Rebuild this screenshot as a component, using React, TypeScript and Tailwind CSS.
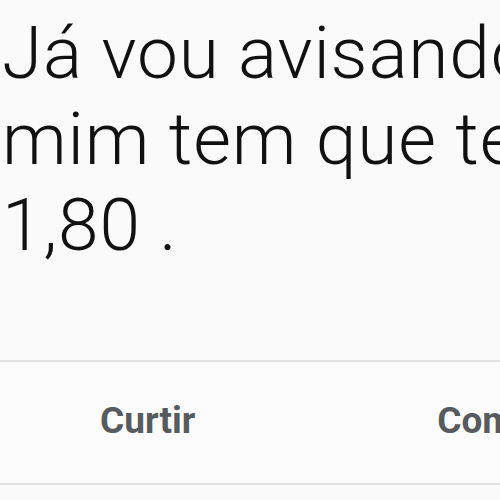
const App = () => {
  return (
    <div
      className="w-[500px] h-[500px] overflow-hidden bg-[#fafafa] flex flex-col"
      style={{ fontFamily: 'Roboto, "Noto Sans", sans-serif' }}
    >
      <div className="h-[360px] shrink-0 pt-[10px] pl-[2px]">
        <p className="whitespace-nowrap text-[73px] leading-[86px] font-light text-[#111111] tracking-[0.8px]">
          Já vou avisando que
          <br />
          mim tem que ter
          <br />
          1,80 .
        </p>
      </div>
      <div className="h-[2px] shrink-0 bg-[#e2e2e2]" />
      <div className="h-[121px] shrink-0 bg-[#fcfcfc] flex items-center pb-[4px] whitespace-nowrap text-[37px] font-bold text-[#575b60]">
        <span className="ml-[100px]">Curtir</span>
        <span className="ml-[242px]">Comentar</span>
      </div>
      <div className="h-[2px] shrink-0 bg-[#e2e2e2]" />
      <div className="flex-1 bg-[#fafafa]" />
    </div>
  );
};

export default App;
